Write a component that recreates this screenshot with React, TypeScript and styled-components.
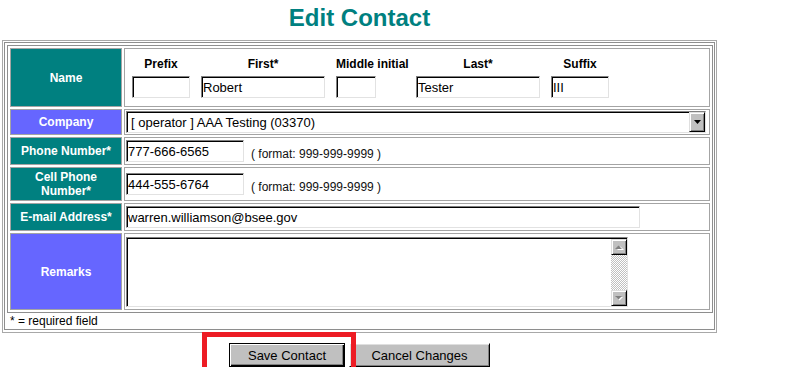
import React from 'react';
import styled, { createGlobalStyle } from 'styled-components';

const GlobalStyle = createGlobalStyle`
  html, body { margin: 0; padding: 0; background: #ffffff; }
  body { font-family: "Liberation Sans", Arial, sans-serif; color: #000; overflow: hidden; }
  * { box-sizing: border-box; }
`;

const Page = styled.div`
  position: relative;
  width: 715px;
  margin-left: 2px;
  padding-top: 4px;
`;

const Title = styled.h1`
  margin: 0 0 9px;
  font-size: 24px;
  line-height: 27px;
  font-weight: bold;
  color: #008080;
  text-align: center;
`;

const OuterTable = styled.div`
  border: 1px solid #a8a8a8;
  padding: 1px 1px 2px 1px;
`;

const OuterCell = styled.div`
  border: 1px solid #8e8e8e;
  padding: 2px 1px 0 2px;
`;

const FormGrid = styled.div`
  display: grid;
  grid-template-columns: 112px 586px;
  grid-template-rows: 59px 26px 28px 34px 28px 77px;
  gap: 2px;
  padding: 2px;
  border: 1px solid #8e8e8e;
`;

const LabelCell = styled.div<{ $tone: 'teal' | 'blue' }>`
  display: flex;
  align-items: center;
  justify-content: center;
  text-align: center;
  border: 1px solid #a4a4a4;
  background: ${(p) => (p.$tone === 'teal' ? '#008080' : '#6666ff')};
  color: #ffffff;
  font-size: 12px;
  font-weight: bold;
  line-height: 14px;
`;

const FieldCell = styled.div`
  display: flex;
  align-items: center;
  border: 1px solid #a4a4a4;
  padding-left: 1px;
  background: #ffffff;
`;

const NameGrid = styled.div`
  display: grid;
  grid-template-columns: 58px 124px 69px 124px 58px;
  grid-template-rows: 14px 22px;
  column-gap: 11px;
  row-gap: 5px;
  margin-left: 6px;
`;

const NameLabel = styled.div`
  font-size: 12px;
  font-weight: bold;
  line-height: 14px;
  text-align: center;
  white-space: nowrap;
`;

const TextInput = styled.input<{ $w: number }>`
  width: ${(p) => p.$w}px;
  height: 22px;
  margin: 0;
  padding: 0 1px;
  border: 1px solid;
  border-color: #808080 #e2e2e2 #e2e2e2 #808080;
  box-shadow: inset 1px 1px 0 #000000;
  background: #ffffff;
  font-family: "Liberation Sans", Arial, sans-serif;
  font-size: 13px;
  color: #000;
  outline: none;
  justify-self: start;
`;

const FormatNote = styled.span`
  margin-left: 7px;
  margin-top: 6px;
  font-size: 12px;
  line-height: 14px;
  color: #111;
  white-space: nowrap;
`;

const SelectBox = styled.div`
  display: flex;
  width: 580px;
  height: 22px;
  border: 1px solid;
  border-color: #808080 #e2e2e2 #e2e2e2 #808080;
  background: #ffffff;
`;

const SelectText = styled.div`
  flex: 1;
  padding-left: 3px;
  border-top: 1px solid #000;
  border-left: 1px solid #000;
  font-size: 13px;
  line-height: 19px;
  white-space: nowrap;
`;

const BevelButton = styled.div`
  display: flex;
  align-items: center;
  justify-content: center;
  width: 16px;
  background: #c0c0c0;
  border: 1px solid;
  border-color: #dfdfdf #000000 #000000 #dfdfdf;
  box-shadow: inset 1px 1px 0 #ffffff, inset -1px -1px 0 #808080;
`;

const DropButton = styled(BevelButton)`
  height: 20px;
`;

const ScrollButton = styled(BevelButton)`
  height: 16px;
  flex: none;
`;

const RemarksBox = styled.div`
  display: flex;
  width: 502px;
  height: 70px;
  padding: 1px 0 0 1px;
  border: 1px solid;
  border-color: #808080 #e2e2e2 #e2e2e2 #808080;
  box-shadow: inset 1px 1px 0 #000000;
  background: #ffffff;
`;

const RemarksArea = styled.textarea`
  flex: 1;
  border: none;
  margin: 0;
  padding: 1px 2px;
  resize: none;
  outline: none;
  overflow: hidden;
  background: transparent;
  font-family: "Liberation Mono", "Courier New", monospace;
  font-size: 13px;
`;

const ScrollBar = styled.div`
  display: flex;
  flex-direction: column;
  width: 16px;
`;

const ScrollTrack = styled.div`
  flex: 1;
  background-image: repeating-conic-gradient(#c0c0c0 0% 25%, #ffffff 0% 50%);
  background-size: 2px 2px;
`;

const RequiredNote = styled.div`
  height: 16px;
  padding-left: 3px;
  font-size: 12px;
  line-height: 16px;
`;

const ButtonRow = styled.div`
  position: relative;
  display: flex;
  justify-content: center;
  gap: 4px;
  margin-top: 10px;
`;

const ActionButton = styled.button<{ $w: number; $default?: boolean }>`
  width: ${(p) => p.$w}px;
  height: 24px;
  margin: 0;
  padding: 0;
  background: #c0c0c0;
  border: 1px solid;
  border-color: ${(p) => (p.$default ? '#000000' : '#ffffff #000000 #000000 #ffffff')};
  box-shadow: ${(p) =>
    p.$default
      ? 'inset 1px 1px 0 #ffffff, inset -1px -1px 0 #000000, inset -2px -2px 0 #808080'
      : 'inset 1px 1px 0 #dfdfdf, inset -1px -1px 0 #808080'};
  font-family: "Liberation Sans", Arial, sans-serif;
  font-size: 13px;
  color: #000;
`;

const Highlight = styled.div`
  position: absolute;
  left: 200px;
  top: -11px;
  width: 154px;
  height: 46px;
  border: 5px solid #ed1c24;
  border-bottom: none;
  pointer-events: none;
`;

const DownArrow = () => (
  <svg width="7" height="4" viewBox="0 0 7 4">
    <polygon points="0,0 7,0 3.5,4" fill="#000" />
  </svg>
);

const GrayArrow = ({ up }: { up?: boolean }) => (
  <svg width="9" height="6" viewBox="0 0 9 6">
    {up ? (
      <>
        <polygon points="1,5 8,5 4.5,1.5" fill="#ffffff" transform="translate(1,1)" />
        <polygon points="0,5 7,5 3.5,1.5" fill="#808080" />
      </>
    ) : (
      <>
        <polygon points="0,1 7,1 3.5,4.5" fill="#ffffff" transform="translate(1,1)" />
        <polygon points="0,1 7,1 3.5,4.5" fill="#808080" />
      </>
    )}
  </svg>
);

export default function App() {
  return (
    <>
      <GlobalStyle />
      <Page>
        <Title>Edit Contact</Title>
        <OuterTable>
          <OuterCell>
            <FormGrid>
              <LabelCell $tone="teal">Name</LabelCell>
              <FieldCell>
                <NameGrid>
                  <NameLabel>Prefix</NameLabel>
                  <NameLabel>First*</NameLabel>
                  <NameLabel>Middle initial</NameLabel>
                  <NameLabel>Last*</NameLabel>
                  <NameLabel>Suffix</NameLabel>
                  <TextInput $w={58} defaultValue="" />
                  <TextInput $w={124} defaultValue="Robert" />
                  <TextInput $w={40} defaultValue="" />
                  <TextInput $w={124} defaultValue="Tester" />
                  <TextInput $w={58} defaultValue="III" />
                </NameGrid>
              </FieldCell>

              <LabelCell $tone="blue">Company</LabelCell>
              <FieldCell>
                <SelectBox>
                  <SelectText>[ operator ] AAA Testing (03370)</SelectText>
                  <DropButton>
                    <DownArrow />
                  </DropButton>
                </SelectBox>
              </FieldCell>

              <LabelCell $tone="teal">Phone Number*</LabelCell>
              <FieldCell>
                <TextInput $w={118} defaultValue="777-666-6565" />
                <FormatNote>( format: 999-999-9999 )</FormatNote>
              </FieldCell>

              <LabelCell $tone="teal">
                Cell Phone
                <br />
                Number*
              </LabelCell>
              <FieldCell>
                <TextInput $w={118} defaultValue="444-555-6764" />
                <FormatNote>( format: 999-999-9999 )</FormatNote>
              </FieldCell>

              <LabelCell $tone="teal">E-mail Address*</LabelCell>
              <FieldCell>
                <TextInput $w={514} defaultValue="warren.williamson@bsee.gov" />
              </FieldCell>

              <LabelCell $tone="blue">Remarks</LabelCell>
              <FieldCell>
                <RemarksBox>
                  <RemarksArea defaultValue="" />
                  <ScrollBar>
                    <ScrollButton>
                      <GrayArrow up />
                    </ScrollButton>
                    <ScrollTrack />
                    <ScrollButton>
                      <GrayArrow />
                    </ScrollButton>
                  </ScrollBar>
                </RemarksBox>
              </FieldCell>
            </FormGrid>
            <RequiredNote>* = required field</RequiredNote>
          </OuterCell>
        </OuterTable>
        <ButtonRow>
          <ActionButton $w={116} $default>
            Save Contact
          </ActionButton>
          <ActionButton $w={141}>Cancel Changes</ActionButton>
          <Highlight />
        </ButtonRow>
      </Page>
    </>
  );
}
